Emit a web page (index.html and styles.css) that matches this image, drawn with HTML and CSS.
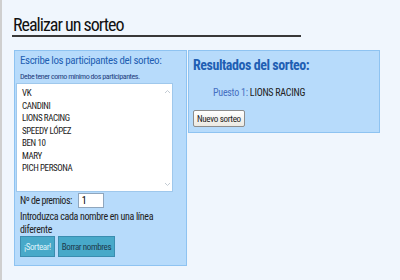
FILE: index.html
```html
<!DOCTYPE html>
<html lang="es">
<head>
    <meta charset="UTF-8">
    <meta name="viewport" content="width=device-width, initial-scale=1.0">
    <title>Realizar un sorteo</title>
    <link rel="stylesheet" href="styles.css">
</head>
<body>
    <div class="page">
        <h1 class="title">Realizar un sorteo</h1>
        <div class="columns">
            <div class="panel entry">
                <h2 class="panel-title">Escribe los participantes del sorteo:</h2>
                <p class="hint">Debe tener como mínimo dos participantes.</p>
                <div class="names">
                    <div class="name-list">
                        <div>VK</div>
                        <div>CANDINI</div>
                        <div>LIONS RACING</div>
                        <div>SPEEDY LÓPEZ</div>
                        <div>BEN 10</div>
                        <div>MARY</div>
                        <div>PICH PERSONA</div>
                    </div>
                    <div class="scrollbar">
                        <svg width="7" height="5" viewBox="0 0 7 5"><path d="M1 4 L3.5 1.5 L6 4" fill="none" stroke="#c3cbd3" stroke-width="1"/></svg>
                        <svg width="7" height="5" viewBox="0 0 7 5"><path d="M1 1 L3.5 3.5 L6 1" fill="none" stroke="#c3cbd3" stroke-width="1"/></svg>
                    </div>
                </div>
                <div class="prizes">
                    <label for="prizes">Nº de premios:</label>
                    <input id="prizes" class="prize-input" type="text" value="1">
                </div>
                <p class="note">Introduzca cada nombre en una línea diferente</p>
                <div class="actions">
                    <button class="btn btn-go">¡Sortear!</button>
                    <button class="btn">Borrar nombres</button>
                </div>
            </div>
            <div class="panel results">
                <h2 class="results-title">Resultados del sorteo:</h2>
                <p class="place"><span class="place-label">Puesto 1:</span> LIONS RACING</p>
                <button class="btn-new">Nuevo sorteo</button>
            </div>
        </div>
    </div>
</body>
</html>
```

FILE: styles.css
```css
body {
    margin: 0;
    height: 280px;
    background-color: #f0f6fd;
    border-left: 2px solid #cfcfcf;
    font-family: "Roboto Condensed", "Liberation Sans", sans-serif;
    color: #222;
}
.page {
    padding: 14px 0 0 10px;
}
.title {
    margin: 0;
    width: 288px;
    padding-left: 1px;
    font-size: 18px;
    font-weight: normal;
    line-height: 21px;
    letter-spacing: -1px;
    color: #111;
    border-bottom: 2px solid #383838;
}
.columns {
    display: flex;
    align-items: flex-start;
    gap: 1px;
    margin-top: 13px;
    margin-left: 2px;
}
.panel {
    background-color: #b7dbfb;
    border: 1px solid #8ec3f1;
    box-sizing: border-box;
}
.entry {
    width: 173px;
    padding: 3px 5px 8px 5px;
}
.panel-title {
    margin: 0;
    font-size: 11px;
    font-weight: normal;
    line-height: 14px;
    letter-spacing: -0.4px;
    color: #1f5fb3;
}
.hint {
    margin: 4px 0 0 0;
    font-size: 8px;
    line-height: 10px;
    letter-spacing: -0.45px;
    color: #1f3f80;
}
.names {
    display: flex;
    height: 109px;
    margin: 1px 8px 0 -4px;
    background-color: #fff;
    border: 1px solid #9fc8ec;
    box-sizing: border-box;
}
.name-list {
    flex: 1;
    padding: 3px 0 0 5px;
    font-size: 9px;
    line-height: 12.5px;
    letter-spacing: -0.4px;
    color: #222;
}
.scrollbar {
    width: 10px;
    display: flex;
    flex-direction: column;
    justify-content: space-between;
    align-items: center;
    padding: 5px 0 4px 0;
}
.prizes {
    display: flex;
    align-items: center;
    gap: 6px;
    margin-top: 1px;
    font-size: 10px;
    letter-spacing: -0.5px;
}
.prize-input {
    width: 26px;
    height: 15px;
    box-sizing: border-box;
    border: 1px solid #8fa6bd;
    padding: 0 3px;
    font-family: inherit;
    font-size: 10px;
    background: #fff;
}
.note {
    margin: 2px 0 0 0;
    font-size: 10px;
    line-height: 13px;
    letter-spacing: -0.35px;
}
.actions {
    display: flex;
    gap: 3px;
}
.btn {
    height: 21px;
    padding: 0 3px;
    background-color: #48a9c9;
    border: 1px solid #3a8db0;
    font-family: inherit;
    font-size: 9px;
    letter-spacing: -0.4px;
    color: #1d3a4c;
}
.btn-go {
    color: #dff3fa;
}
.results {
    width: 192px;
    padding: 6px 4px 5px 4px;
}
.results-title {
    margin: 0;
    font-size: 14px;
    line-height: 16px;
    letter-spacing: -0.45px;
    color: #1f5fb3;
}
.place {
    margin: 14px 0 0 20px;
    font-size: 10px;
    line-height: 12px;
    letter-spacing: -0.25px;
    color: #222;
}
.place-label {
    color: #4670c2;
}
.btn-new {
    display: block;
    margin-top: 11px;
    height: 17px;
    padding: 0 3px;
    background: linear-gradient(#ffffff, #ece9e2);
    border: 1px solid #8d8d8d;
    border-radius: 2px;
    font-family: inherit;
    font-size: 9px;
    letter-spacing: -0.3px;
    color: #222;
}
```
